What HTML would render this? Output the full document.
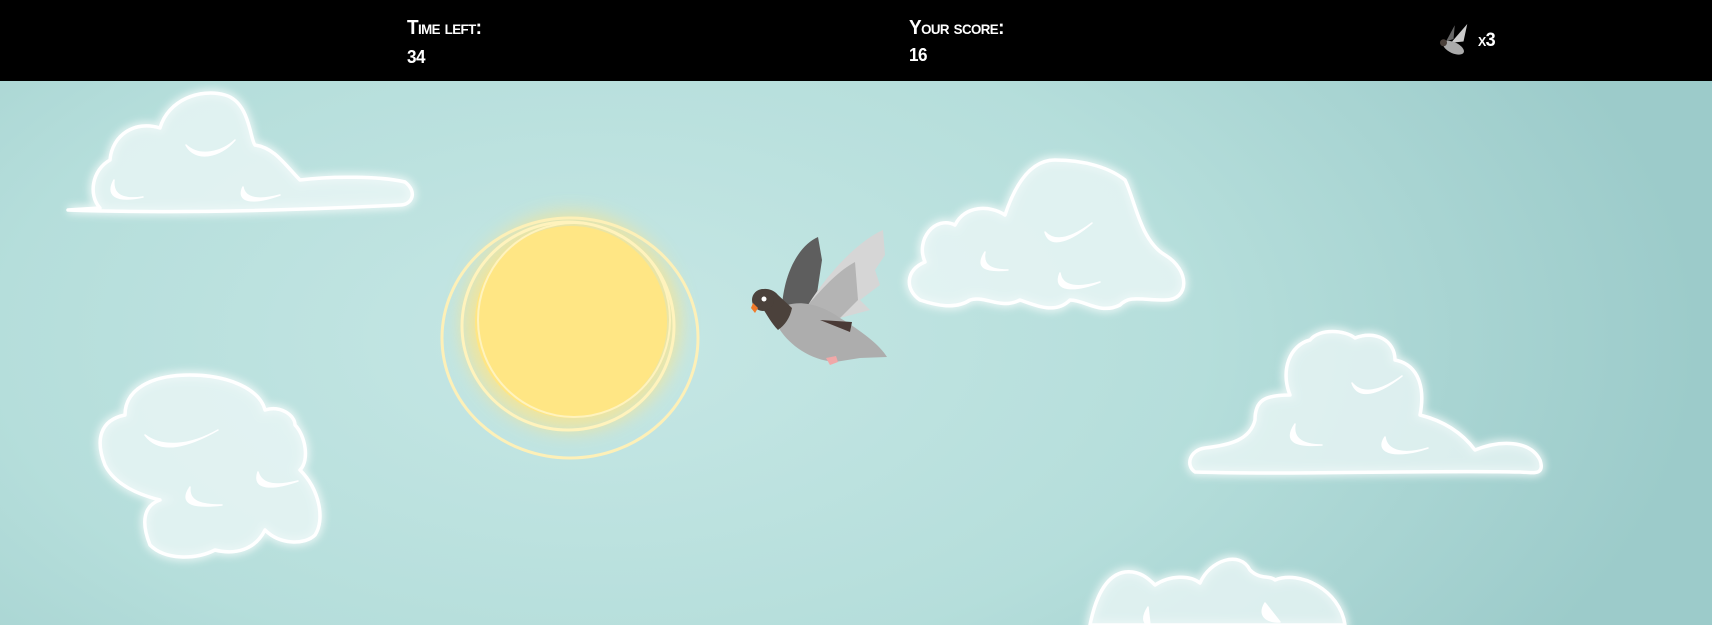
<!DOCTYPE html>
<html><head><meta charset="utf-8"><style>
html,body{margin:0;padding:0;width:1712px;height:625px;overflow:hidden;}
body{position:relative;background:radial-gradient(ellipse 1100px 600px at 600px 340px,#c6e7e5 0%,#b5dedb 55%,#9ccbca 100%);font-family:"Liberation Sans",sans-serif;}
#hdr{position:absolute;left:0;top:0;width:1712px;height:81px;background:#000;color:#fff;font-weight:bold;}
.lab{position:absolute;font-size:20px;font-variant:small-caps;letter-spacing:-0.6px;line-height:20px;transform:scaleX(0.95);transform-origin:left;}
svg{position:absolute;left:0;top:0;}
</style></head><body>
<div id="hdr">
<div class="lab" style="left:407px;top:18px">Time left:</div>
<div class="lab" style="left:407px;top:47px;font-size:18px">34</div>
<div class="lab" style="left:909px;top:18px">Your score:</div>
<div class="lab" style="left:909px;top:45px;font-size:18px">16</div>
<div class="lab" style="left:1478px;top:31px;font-size:19px">x3</div>
</div>
<svg width="1712" height="625" viewBox="0 0 1712 625">
<defs>
<filter id="glow" x="-20%" y="-20%" width="140%" height="140%"><feGaussianBlur stdDeviation="4"/></filter>
<filter id="sg" x="-30%" y="-30%" width="160%" height="160%"><feGaussianBlur stdDeviation="10"/></filter>
<g id="cl">
<path d="M68,210 L100,208 C88,195 92,170 110,160 C112,135 135,120 160,128 C168,100 200,88 225,95 C250,102 250,140 255,145 C275,148 285,165 300,180 C330,176 380,176 405,182 C418,192 412,205 400,205 C300,210 180,214 68,210 Z"/>
<path d="M920,300 C905,290 905,270 925,262 C915,240 935,215 955,225 C965,205 990,205 1005,215 C1015,185 1030,160 1055,160 C1085,160 1110,168 1125,180 C1135,200 1140,240 1165,255 C1190,270 1190,300 1165,300 C1140,300 1130,295 1120,305 C1100,315 1085,300 1070,300 C1055,315 1035,305 1020,300 C1000,310 985,295 970,300 C955,310 935,305 920,300 Z"/>
<path d="M1195,472 C1185,465 1190,450 1205,448 C1230,445 1250,440 1255,420 C1255,400 1265,395 1290,395 C1280,370 1290,345 1310,340 C1320,328 1345,330 1355,338 C1375,330 1395,340 1395,360 C1420,365 1425,390 1420,415 C1440,420 1460,430 1475,450 C1500,440 1530,440 1540,460 C1545,475 1535,473 1520,472 C1420,470 1300,475 1195,472 Z"/>
<path d="M150,545 C140,520 145,505 160,500 C140,495 115,485 105,465 C95,440 100,420 125,415 C125,390 150,375 190,375 C230,375 260,390 265,410 C280,405 295,415 295,425 C305,435 310,460 300,470 C320,490 325,520 315,535 C305,545 280,545 265,530 C255,550 235,555 215,550 C195,560 165,560 150,545 Z"/>
<path d="M1090,625 C1095,600 1105,575 1125,572 C1140,570 1150,580 1155,585 C1170,575 1190,575 1200,583 C1210,560 1240,550 1250,570 C1260,580 1270,575 1275,580 C1300,570 1340,590 1345,625 Z"/>
</g>
</defs>
<g transform="translate(1436,24) scale(0.25)">
<path d="M40,70 L75,5 L70,60 Z" fill="#666"/>
<path d="M60,75 L125,0 L110,70 Z" fill="#ccc"/>
<ellipse cx="70" cy="95" rx="45" ry="22" fill="#aaa" transform="rotate(25 70 95)"/>
<circle cx="30" cy="75" r="14" fill="#4a403a"/>
</g>
<circle cx="571" cy="322" r="108" fill="#fde58a" filter="url(#sg)" opacity="0.8"/>
<circle cx="571" cy="322" r="96" fill="#ffe684"/>
<ellipse cx="570" cy="338" rx="128" ry="120" fill="none" stroke="#fdf0b8" stroke-width="3"/>
<ellipse cx="568" cy="326" rx="106" ry="104" fill="none" stroke="#fff3bd" stroke-width="3"/>
<ellipse cx="574" cy="320" rx="96" ry="97" fill="none" stroke="#fff3bd" stroke-width="2"/>
<use href="#cl" fill="rgba(255,255,255,0.4)" stroke="#fff" stroke-width="8" filter="url(#glow)" opacity="0.7"/>
<use href="#cl" fill="rgba(238,248,248,0.6)" stroke="#fff" stroke-width="3.5" stroke-linejoin="round"/>
<g fill="#fff" stroke="#fff" stroke-width="1.5" stroke-linejoin="round">
<path d="M186,145 C195,162 220,158 235,140 C222,152 200,158 186,145 Z"/>
<path d="M114,180 C106,195 115,203 143,197 C125,200 112,196 114,180 Z"/>
<path d="M243,187 C236,202 252,205 280,195 C262,200 245,200 243,187 Z"/>
<path d="M1045,232 C1050,250 1072,240 1092,223 C1072,238 1055,243 1045,232 Z"/>
<path d="M985,252 C975,268 985,272 1008,270 C992,270 982,266 985,252 Z"/>
<path d="M1060,273 C1052,292 1075,292 1100,282 C1080,288 1062,288 1060,273 Z"/>
<path d="M1352,383 C1358,400 1378,395 1402,376 C1380,392 1362,395 1352,383 Z"/>
<path d="M1295,424 C1283,442 1296,447 1322,445 C1305,445 1292,440 1295,424 Z"/>
<path d="M1385,437 C1373,455 1400,458 1428,448 C1405,455 1387,452 1385,437 Z"/>
<path d="M145,435 C160,455 188,447 218,430 C190,446 162,448 145,435 Z"/>
<path d="M190,487 C178,505 195,508 222,505 C202,505 188,502 190,487 Z"/>
<path d="M258,472 C252,490 272,490 298,481 C278,486 262,486 258,472 Z"/>
<path d="M1148,607 C1140,620 1145,625 1150,625 Z"/>
<path d="M1265,603 C1258,615 1265,622 1280,622 Z"/>
</g>
<path d="M782,305 C785,270 800,245 818,237 L822,260 L816,300 L798,310 Z" fill="#5e5e5e"/>
<path d="M808,305 C830,270 860,240 883,230 L885,255 L875,270 L880,285 L860,300 L870,310 L840,318 Z" fill="#d6d6d6"/>
<path d="M808,305 C825,285 840,270 855,262 L858,300 L840,318 Z" fill="#b4b4b4"/>
<path d="M778,310 C790,300 815,300 840,318 C860,330 880,345 887,357 L860,358 L835,362 C810,360 790,345 780,330 Z" fill="#adadad"/>
<path d="M820,320 L852,322 L850,332 Z" fill="#4a3a36"/>
<path d="M754,298 C754,288 770,285 778,295 L792,308 C790,318 785,325 778,330 C770,322 766,312 760,305 Z" fill="#4b413b"/>
<circle cx="763" cy="300" r="11" fill="#4b413b"/>
<circle cx="764" cy="299" r="2.5" fill="#fff"/>
<path d="M753,303 L758,308 L755,313 L751,308 Z" fill="#f07a2a"/>
<path d="M826,358 L836,356 L838,362 L830,365 Z" fill="#f0a8a8"/>
</svg>
</body></html>
